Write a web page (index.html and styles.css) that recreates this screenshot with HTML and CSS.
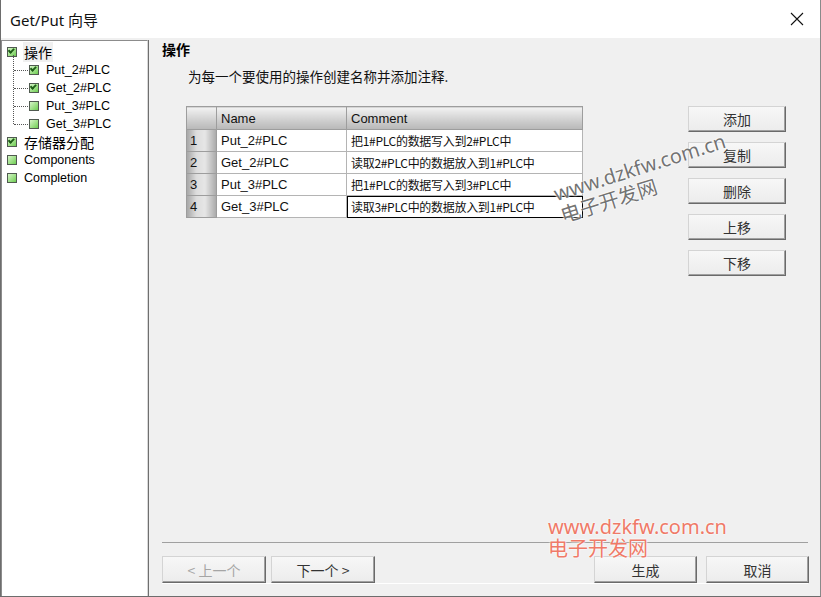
FILE: index.html
```html
<!DOCTYPE html>
<html lang="zh-CN">
<head>
    <meta charset="UTF-8">
    <title>Get/Put 向导</title>
    <link rel="stylesheet" href="styles.css">
</head>
<body>
    <div class="window">
        <!-- Title Bar -->
        <div class="titlebar">
            <span class="title">Get/Put 向导</span>
            <svg class="close" width="14" height="14" viewBox="0 0 14 14">
                <path d="M1 1 L13 13 M13 1 L1 13" stroke="#111" stroke-width="1.1" fill="none"/>
            </svg>
        </div>

        <div class="content">
            <!-- Left Tree -->
            <div class="tree">
                <div class="node top sel"><span class="box on"></span><span class="label cn">操作</span></div>
                <div class="children">
                    <div class="node child"><span class="dots"></span><span class="box on"></span><span class="label">Put_2#PLC</span></div>
                    <div class="node child"><span class="dots"></span><span class="box on"></span><span class="label">Get_2#PLC</span></div>
                    <div class="node child"><span class="dots"></span><span class="box"></span><span class="label">Put_3#PLC</span></div>
                    <div class="node child"><span class="dots"></span><span class="box"></span><span class="label">Get_3#PLC</span></div>
                </div>
                <div class="node top"><span class="box on"></span><span class="label cn">存储器分配</span></div>
                <div class="node top"><span class="box"></span><span class="label">Components</span></div>
                <div class="node top"><span class="box"></span><span class="label">Completion</span></div>
            </div>

            <!-- Main Panel -->
            <div class="main">
                <h2 class="heading">操作</h2>
                <p class="desc">为每一个要使用的操作创建名称并添加注释.</p>

                <div class="work">
                    <table class="grid">
                        <tr class="head">
                            <th class="num"></th>
                            <th class="name">Name</th>
                            <th class="comment">Comment</th>
                        </tr>
                        <tr><td class="num">1</td><td>Put_2#PLC</td><td class="cn">把1#PLC的数据写入到2#PLC中</td></tr>
                        <tr><td class="num">2</td><td>Get_2#PLC</td><td class="cn">读取2#PLC中的数据放入到1#PLC中</td></tr>
                        <tr><td class="num">3</td><td>Put_3#PLC</td><td class="cn">把1#PLC的数据写入到3#PLC中</td></tr>
                        <tr><td class="num">4</td><td>Get_3#PLC</td><td class="cn edit">读取3#PLC中的数据放入到1#PLC中</td></tr>
                    </table>

                    <div class="side-buttons">
                        <button class="btn">添加</button>
                        <button class="btn">复制</button>
                        <button class="btn">删除</button>
                        <button class="btn">上移</button>
                        <button class="btn">下移</button>
                    </div>
                </div>

                <div class="footer">
                    <div class="nav prev-next">
                        <button class="btn wide disabled">&lt; 上一个</button>
                        <button class="btn wide">下一个 &gt;</button>
                    </div>
                    <div class="nav finish">
                        <button class="btn wide">生成</button>
                        <button class="btn wide">取消</button>
                    </div>
                </div>
            </div>
        </div>

        <!-- Watermarks -->
        <div class="mark mark-mid">
            <span>www.dzkfw.com.cn</span>
            <span class="sub">电子开发网</span>
        </div>
        <div class="mark mark-low">
            <span>www.dzkfw.com.cn</span>
            <span>电子开发网</span>
        </div>
    </div>
</body>
</html>
```

FILE: styles.css
```css
/* General */
body {
    margin: 0;
    font-family: "Liberation Sans", "Noto Sans CJK SC", sans-serif;
    font-size: 13px;
    color: #000;
    background: #fff;
}

.window {
    position: relative;
    width: 821px;
    height: 597px;
    box-sizing: border-box;
    border-left: 1px solid #6d6d6d;
    border-right: 1px solid #8a8a8a;
    border-bottom: 1px solid #6d6d6d;
    display: flex;
    flex-direction: column;
    background: #f0f0f0;
    overflow: hidden;
}

/* Title Bar */
.titlebar {
    height: 38px;
    flex: none;
    background: #fff;
    display: flex;
    align-items: center;
    justify-content: space-between;
    padding: 0 16px 0 9px;
}

.title {
    font-size: 15px;
    font-family: "Noto Sans", "Noto Sans CJK SC", sans-serif;
    color: #111;
}

.content {
    flex: 1;
    display: flex;
    min-height: 0;
}

/* Tree */
.tree {
    width: 145px;
    margin-top: 2px;
    border: 1px solid #8c8c8c;
    border-right-color: #d8d8d8;
    border-bottom: none;
    box-shadow: 1px 0 0 #6f6f6f;
    background: #fff;
    padding-top: 2px;
    flex: none;
}

.node {
    height: 18px;
    display: flex;
    align-items: center;
    white-space: nowrap;
    font-size: 12.5px;
}

.node.top {
    padding-left: 5px;
}

.node .label {
    margin-left: 7px;
}

.node .label.cn {
    font-size: 14px;
    font-family: "Noto Sans CJK SC", sans-serif;
}

.node.sel .label {
    background: #f0f0f0;
    margin-left: 6px;
    padding: 0 1px;
}

.children {
    position: relative;
}

.children::before {
    content: "";
    position: absolute;
    left: 11px;
    top: -6px;
    height: 69px;
    border-left: 1px dotted #555;
}

.node.child {
    padding-left: 12px;
}

.dots {
    width: 14px;
    border-top: 1px dotted #555;
    margin-right: 1px;
}

.box {
    width: 8px;
    height: 8px;
    border: 1px solid #505a50;
    background: linear-gradient(135deg, #d6f5c8, #6fce52);
    position: relative;
    flex: none;
}

.box.on::after {
    content: "";
    position: absolute;
    left: 1px;
    top: 0;
    width: 4px;
    height: 2px;
    border-left: 2px solid #1d5d16;
    border-bottom: 2px solid #1d5d16;
    transform: rotate(-45deg);
    transform-origin: 3px 3px;
}

/* Main Panel */
.main {
    flex: 1;
    display: flex;
    flex-direction: column;
    padding: 0 11px 13px 14px;
    min-width: 0;
}

.heading {
    margin: 2px 0 0;
    font-size: 14px;
    font-weight: bold;
    font-family: "Noto Sans CJK SC", sans-serif;
    line-height: 18px;
}

.desc {
    margin: 9px 0 0 26px;
    font-size: 13.5px;
    font-family: "Noto Sans CJK SC", sans-serif;
    color: #111;
    line-height: 18px;
}

.work {
    flex: 1;
    display: flex;
    justify-content: space-between;
    align-items: flex-start;
    margin-top: 21px;
    padding-left: 24px;
}

/* Grid */
.grid {
    border-collapse: collapse;
    border: 1px solid #a8a8a8;
    background: #fff;
    font-size: 13px;
}

.grid th,
.grid td {
    height: 21px;
    padding: 0 4px;
    border: 1px solid #b4b4b4;
    text-align: left;
    font-weight: normal;
    white-space: nowrap;
    color: #111;
}

.grid .head th {
    background: linear-gradient(#f2f2f2, #c8c8c8 70%, #b8b8b8);
    border-color: #9d9d9d;
    padding-top: 1px;
}

.grid .num {
    width: 21px;
    background: linear-gradient(90deg, #a9a9a9, #dcdcdc 30%, #e6e6e6 60%, #a8a8a8);
    border-color: #9d9d9d;
}

.grid td.num {
    padding-left: 3px;
}

.grid .name {
    width: 121px;
}

.grid .comment {
    width: 227px;
}

.grid .cn {
    font-size: 12px;
    font-family: "Noto Sans CJK SC", sans-serif;
    letter-spacing: -0.3px;
}

.grid td.edit {
    outline: 1px solid #000;
    outline-offset: -1px;
}

/* Buttons */
.btn {
    font-family: "Noto Sans CJK SC", sans-serif;
    font-size: 14px;
    font-weight: normal;
    color: #333;
    background: linear-gradient(#f7f7f7, #ececec);
    border: 1px solid;
    border-color: #d4d4d4 #6a6a6a #6a6a6a #d4d4d4;
    box-shadow: inset -1px -1px 0 #a0a0a0;
    padding: 0;
    cursor: pointer;
}

.side-buttons {
    display: flex;
    flex-direction: column;
    gap: 10px;
    margin-right: 23px;
}

.side-buttons .btn {
    width: 98px;
    height: 26px;
}

.footer {
    border-top: 1px solid #a0a0a0;
    box-shadow: 0 1px 0 #fff;
    margin-right: 1px;
    padding-top: 13px;
    display: flex;
    justify-content: space-between;
}

.nav {
    display: flex;
}

.prev-next {
    gap: 5px;
}

.finish {
    gap: 9px;
    margin-right: -1px;
}

.btn.wide {
    width: 104px;
    height: 27px;
}

.finish .btn.wide {
    width: 103px;
}

.btn.disabled {
    color: #a5a5a5;
}

/* Watermarks */
.mark {
    position: absolute;
    display: flex;
    flex-direction: column;
    font-family: "Noto Sans", "Noto Sans CJK SC", sans-serif;
    font-size: 20px;
    line-height: 22px;
    pointer-events: none;
}

.mark-mid {
    left: 550px;
    top: 184px;
    color: rgba(90, 90, 90, 0.85);
    transform: rotate(-17.5deg);
    transform-origin: left top;
    text-shadow: 0 0 2px #fff, 0 0 2px #fff;
}

.mark-mid .sub {
    margin-left: 0;
    margin-top: 1px;
}

.mark-low {
    left: 547px;
    top: 516px;
    color: #ef7a68;
    text-shadow: 0 0 2px #fff, 0 0 2px #fff;
}
```
